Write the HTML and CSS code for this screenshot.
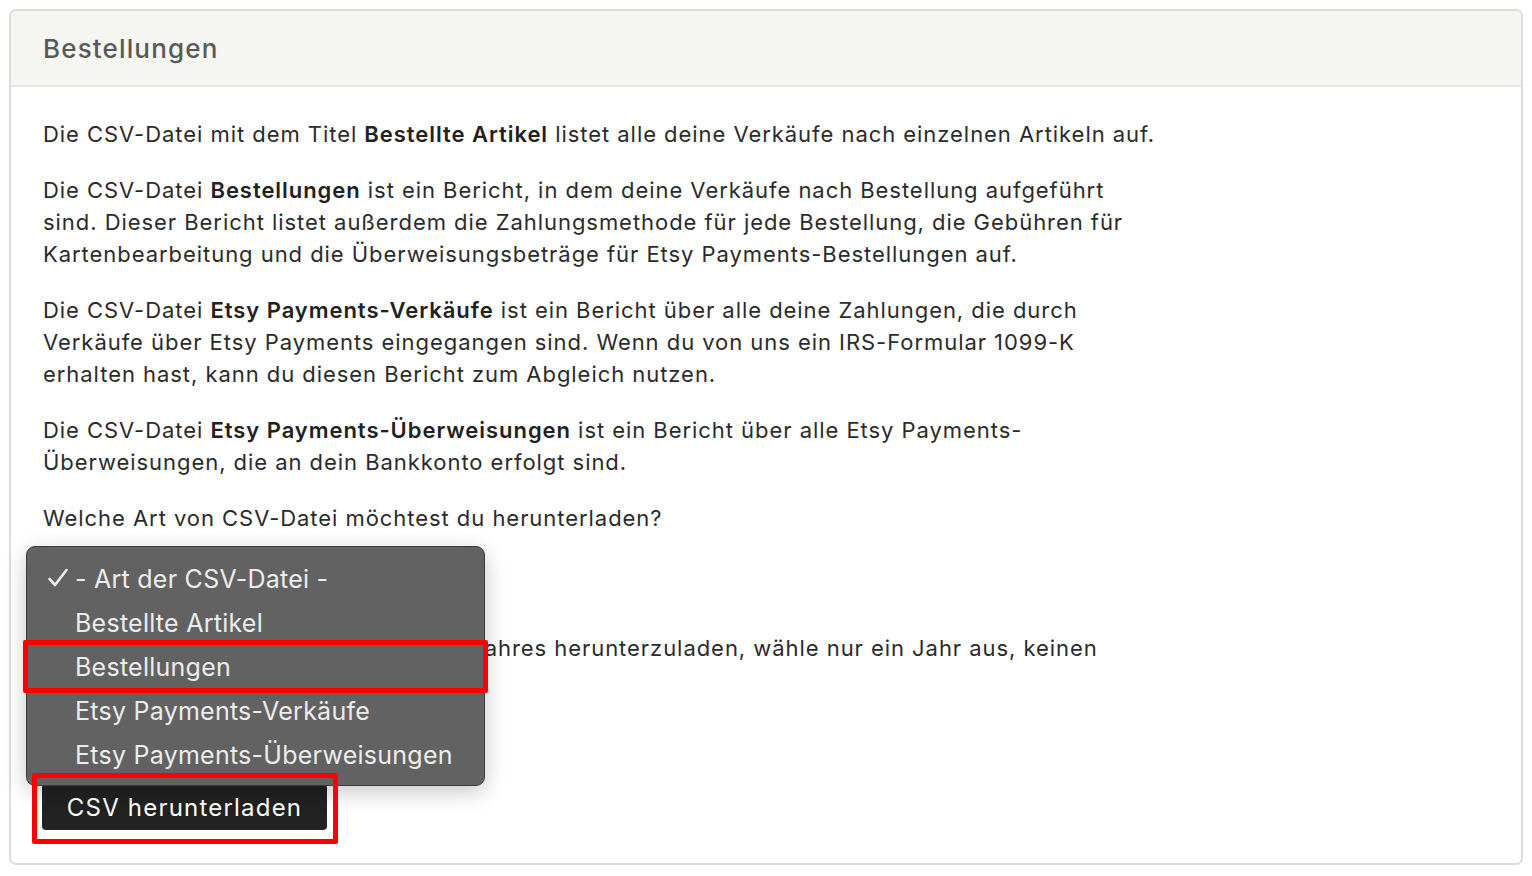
FILE: index.html
```html
<!DOCTYPE html>
<html lang="de">
<head>
<meta charset="utf-8">
<title>Bestellungen</title>
<link rel="stylesheet" href="styles.css">
</head>
<body>
<div class="page">
  <section class="card">
    <header class="card-head">
      <h2 class="card-title">Bestellungen</h2>
    </header>
    <div class="card-body">
      <p class="para">Die CSV-Datei mit dem Titel <strong>Bestellte Artikel</strong> listet alle deine Verkäufe nach einzelnen Artikeln auf.</p>
      <p class="para">Die CSV-Datei <strong>Bestellungen</strong> ist ein Bericht, in dem deine Verkäufe nach Bestellung aufgeführt sind. Dieser Bericht listet außerdem die Zahlungsmethode für jede Bestellung, die Gebühren für Kartenbearbeitung und die Überweisungsbeträge für Etsy Payments-Bestellungen auf.</p>
      <p class="para">Die CSV-Datei <strong>Etsy Payments-Verkäufe</strong> ist ein Bericht über alle deine Zahlungen, die durch Verkäufe über Etsy Payments eingegangen sind. Wenn du von uns ein IRS-Formular 1099-K erhalten hast, kann du diesen Bericht zum Abgleich nutzen.</p>
      <p class="para">Die CSV-Datei <strong>Etsy Payments-Überweisungen</strong> ist ein Bericht über alle Etsy Payments-Überweisungen, die an dein Bankkonto erfolgt sind.</p>
      <p class="para">Welche Art von CSV-Datei möchtest du herunterladen?</p>
      <div class="select-box">- Art der CSV-Datei -</div>
      <p class="para"><span class="tight">Um die Daten eines gesamten Kalenderj</span>ahres herunterzuladen, wähle nur ein Jahr aus, keinen Monat.</p>
      <div class="date-row">
        <div class="select-box small">Jahr</div>
        <div class="select-box small">Monat</div>
      </div>
      <button class="btn-dark" type="button">CSV herunterladen</button>
    </div>
  </section>

  <div class="popup" role="listbox">
    <div class="opt checked"><svg class="check" width="22" height="22" viewBox="0 0 22 22" aria-hidden="true"><path d="M2.5 12 L8 18 L19.5 3" fill="none" stroke="#ececec" stroke-width="2.6" stroke-linecap="round" stroke-linejoin="round"/></svg>- Art der CSV-Datei -</div>
    <div class="opt">Bestellte Artikel</div>
    <div class="opt">Bestellungen</div>
    <div class="opt">Etsy Payments-Verkäufe</div>
    <div class="opt">Etsy Payments-Überweisungen</div>
  </div>
  <div class="mark mark-option"></div>
  <div class="mark mark-button"></div>
</div>
</body>
</html>
```
FILE: styles.css
```css
* { box-sizing: border-box; }
html, body { margin: 0; padding: 0; background: #fff; }
body {
  font-family: Inter, "Liberation Sans", sans-serif;
  color: #222;
}
.page {
  position: relative;
  padding: 9px;
  width: 1532px;
  height: 876px;
}
.card {
  border: 2px solid #dcdcd8;
  border-radius: 7px;
  width: 1514px;
  height: 856px;
  overflow: hidden;
}
.card-head {
  background: #f5f5f1;
  border-bottom: 2px solid #e6e6e2;
  height: 76px;
  display: flex;
  align-items: center;
  padding: 0 32px;
}
.card-title {
  margin: 0;
  font-size: 26px;
  font-weight: 500;
  color: #595957;
  letter-spacing: 1.15px;
}
.card-body {
  padding: 31px 32px 0 32px;
}
.para {
  margin: 0 0 24px 0;
  max-width: 1116px;
  font-size: 22px;
  line-height: 32px;
  color: #2b2b2b;
  letter-spacing: 0.95px;
}
.para strong { font-weight: 600; color: #222; }
.para .tight { letter-spacing: 0.7px; }
.select-box {
  width: 440px;
  height: 50px;
  border: 1px solid #bbb;
  border-radius: 4px;
  margin-bottom: 24px;
  padding: 0 14px;
  display: flex;
  align-items: center;
  font-size: 20px;
}
.date-row {
  display: flex;
  gap: 16px;
  margin-bottom: 14px;
}
.select-box.small { width: 200px; margin-bottom: 0; }
.btn-dark {
  display: block;
  width: 285px;
  height: 46px;
  margin-left: -1px;
  background: #222;
  color: #fff;
  border: 0;
  border-radius: 4px;
  font-family: inherit;
  font-size: 24px;
  letter-spacing: 1.2px;
  padding: 0;
}
.popup {
  position: absolute;
  left: 26px;
  top: 546px;
  width: 459px;
  height: 240px;
  background: #626262;
  border: 1px solid #3c3c3c;
  border-radius: 9px;
  box-shadow: 0 6px 22px rgba(0,0,0,0.22);
  padding: 10px 0 0 0;
}
.opt {
  height: 44px;
  display: flex;
  align-items: center;
  padding-left: 48px;
  font-size: 25px;
  color: #ececec;
  position: relative;
  letter-spacing: 0.25px;
}
.check {
  position: absolute;
  left: 20px;
  top: 10px;
}
.mark {
  position: absolute;
  border: 5px solid #ff0000;
  border-radius: 2px;
}
.mark-option { left: 23px; top: 640px; width: 465px; height: 53px; }
.mark-button { left: 32px; top: 773px; width: 306px; height: 71px; }
```
